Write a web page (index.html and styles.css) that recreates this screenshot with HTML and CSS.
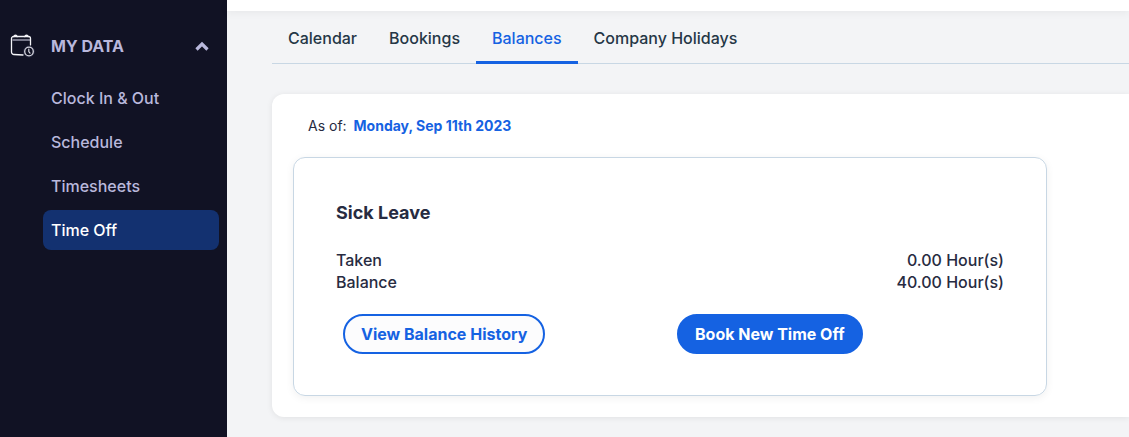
FILE: index.html
```
<!DOCTYPE html>
<html lang="en">
<head>
    <meta charset="UTF-8">
    <meta name="viewport" content="width=device-width, initial-scale=1.0">
    <title>Time Off - Balances</title>
    <link rel="stylesheet" href="styles.css">
</head>
<body>
    <aside class="sidebar">
        <button type="button" class="menu-toggle" aria-expanded="true" aria-controls="my-data">
            <svg class="menu-icon" width="26" height="26" viewBox="0 0 26 26" fill="none" stroke="#f4f4f8" stroke-width="1.3" stroke-linecap="round" aria-hidden="true">
                <path d="M3.500 7h17.500" stroke="#77778a" stroke-width="2" stroke-linecap="butt"/>
                <path d="M5 3.500h-.5a2 2 0 0 0-2 2v13.500a2.500 2.500 0 0 0 2.500 2.500l9 .5M8 3.500h8M19 3.500h.5a2 2 0 0 1 2 2v6.500"/>
                <path d="M5.200 3.500a1.300 1.300 0 0 1 2.600 0zM16.200 3.500a1.300 1.300 0 0 1 2.600 0z" stroke-width="1.600"/>
                <circle cx="20" cy="18.500" r="5.500" fill="#111224" stroke="#25273f" stroke-width="1"/>
                <circle cx="20" cy="18.500" r="4.300" stroke="#d8d8e2"/>
                <path d="M19.800 16v2.500l1.200 1.700" stroke="#d8d8e2" stroke-width="1.200"/>
            </svg>
            <span class="menu-title">MY DATA</span>
            <svg class="chevron" width="14" height="10" viewBox="0 0 14 10" fill="none" stroke="#b9b8dc" stroke-width="3.200" aria-hidden="true">
                <path d="M1.500 8.500L7 3 12.500 8.500"/>
            </svg>
        </button>
        <nav class="submenu" id="my-data">
            <a href="#">Clock In &amp; Out</a>
            <a href="#">Schedule</a>
            <a href="#">Timesheets</a>
            <a href="#" class="active" aria-current="page">Time Off</a>
        </nav>
    </aside>

    <div class="page">
        <header class="topbar"></header>
        <main class="content">
            <nav class="tabs">
                <a href="#">Calendar</a>
                <a href="#">Bookings</a>
                <a href="#" class="active">Balances</a>
                <a href="#">Company Holidays</a>
            </nav>

            <section class="panel">
                <p class="as-of">As of: <a href="#">Monday, Sep 11th 2023</a></p>

                <div class="card">
                    <h2>Sick Leave</h2>
                    <dl class="balance">
                        <dt>Taken</dt>
                        <dd>0.00 Hour(s)</dd>
                        <dt>Balance</dt>
                        <dd>40.00 Hour(s)</dd>
                    </dl>
                    <div class="actions">
                        <div class="action">
                            <button type="button" class="btn btn-outline">View Balance History</button>
                        </div>
                        <div class="action">
                            <button type="button" class="btn btn-primary">Book New Time Off</button>
                        </div>
                    </div>
                </div>
            </section>
        </main>
    </div>
</body>
</html>
```

FILE: styles.css
```
* { box-sizing: border-box; }
body { display: flex; min-height: 100vh; margin: 0; background: #f3f4f6; color: #272b41; font-family: Inter, "Liberation Sans", sans-serif; font-size: 16px; font-weight: 500; line-height: 22px; }
a { color: inherit; text-decoration: none; }
button { font: inherit; cursor: pointer; }

.sidebar { flex: 0 0 227px; padding: 24px 8px; background: #111224; color: #b9b8dc; }
.menu-toggle { display: flex; align-items: center; width: 100%; height: 44px; padding: 0 10px 0 1px; border: none; background: none; color: inherit; text-align: left; }
.menu-title { flex: 1; margin-left: 16px; font-weight: 700; }
.submenu { display: flex; flex-direction: column; gap: 4px; margin: 10px 0 0 35px; }
.submenu a { padding: 9px 8px; border-radius: 8px; }
.submenu a:hover { color: #fff; }
.submenu .active { background: #133170; color: #fff; }

.page { flex: 1; min-width: 0; }
.topbar { height: 11px; background: #fff; box-shadow: 0 2px 8px rgba(0, 0, 0, 0.05); }
.content { padding: 0 0 20px 45px; }
.tabs { display: flex; border-bottom: 1px solid #c8d7e4; color: #253746; }
.tabs a { margin-bottom: -1px; padding: 16px 16px 12px; border-bottom: 3px solid transparent; }
.tabs .active { border-color: #1562e2; color: #1562e2; }

.panel { margin-top: 30px; padding: 21px 82px 21px 21px; border-radius: 12px 0 0 12px; background: #fff; box-shadow: 0 1px 6px rgba(0, 0, 0, 0.08); }
.as-of { margin: 0 0 20px 15px; font-size: 14px; font-weight: 400; }
.as-of a { margin-left: 3px; color: #1562e2; font-weight: 700; }

.card { padding: 44px 42px 41px; border: 1px solid #c8d7e4; border-radius: 12px; box-shadow: 0 2px 8px rgba(0, 0, 0, 0.06); }
.card h2 { margin: 0 0 25px; font-size: 18px; font-weight: 700; }
.balance { display: grid; grid-template-columns: 1fr auto; margin: 0 0 21px; }
.balance dd { margin: 0; text-align: right; }
.actions { display: grid; grid-template-columns: 1fr 1fr; }
.action { padding: 0 7px; }
.btn { height: 40px; padding: 0 16px; border: 2px solid #1562e2; border-radius: 20px; font-weight: 700; }
.btn-outline { background: #fcfcfd; color: #1562e2; }
.btn-primary { background: #1562e2; color: #fff; }
```
